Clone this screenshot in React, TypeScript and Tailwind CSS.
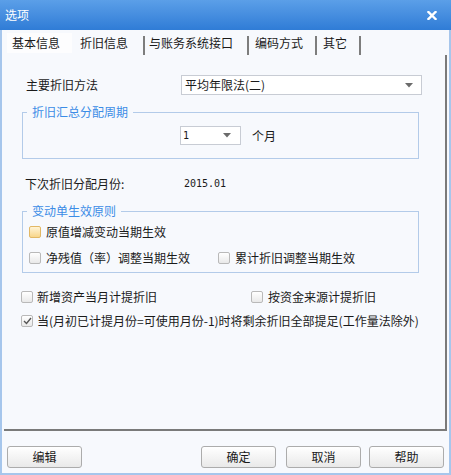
import React from "react";

const font = { fontFamily: '"Noto Sans CJK SC", "Noto Sans", sans-serif' };

function Arrow() {
  return (
    <svg width="8" height="5" viewBox="0 0 8 5" className="shrink-0">
      <path d="M0 0 H8 L4 4.5 Z" fill="#6b6b6b" />
    </svg>
  );
}

function Check({ state }: { state?: "hover" | "checked" }) {
  const box =
    state === "hover"
      ? "border-[#e2b865] bg-gradient-to-b from-[#fff4d6] to-[#f8d68a]"
      : "border-[#b9b9b9] bg-gradient-to-b from-[#ffffff] to-[#e9e9e9]";
  return (
    <span
      className={`flex h-[12px] w-[12px] shrink-0 items-center justify-center rounded-[2px] border ${box}`}
    >
      {state === "checked" && (
        <svg width="9" height="8" viewBox="0 0 9 8">
          <path d="M1 4 L3.5 6.5 L8 1" fill="none" stroke="#555" strokeWidth="1.4" />
        </svg>
      )}
    </span>
  );
}

function Btn({ children, className = "" }: { children: React.ReactNode; className?: string }) {
  return (
    <button
      className={`flex h-[22px] w-[75px] items-center justify-center rounded-[3px] border border-[#acacac] bg-gradient-to-b from-[#ffffff] to-[#e9e9e9] text-[12px] text-[#1a1a1a] ${className}`}
    >
      {children}
    </button>
  );
}

export default function App() {
  return (
    <div
      style={font}
      className="flex h-[475px] w-[451px] flex-col overflow-hidden bg-[#f7f9fd] text-[12px] leading-[16px] text-[#1a1a1a]"
    >
      {/* title bar */}
      <div className="flex h-[30px] shrink-0 items-center justify-between bg-gradient-to-b from-[#5b9fe8] to-[#2f7cd6] pl-[5px] pr-[14px]">
        <span className="text-[12px] text-white">选项</span>
        <svg width="10" height="9" viewBox="0 0 10 9">
          <path d="M1.5 1 L8.5 8 M8.5 1 L1.5 8" stroke="#fff" strokeWidth="2.4" strokeLinecap="square" />
        </svg>
      </div>

      <div className="flex flex-1 flex-col border-x-2 border-b-2 border-[#a6c6ec] px-[2px]">
        {/* tabs */}
        <div className="flex h-[25px] shrink-0 items-end">
          <span className="mb-[2px] ml-[3px] flex h-[20px] w-[65px] items-center bg-[#fdfdfe] pl-[5px]">
            基本信息
          </span>
          <span className="mb-[4px] flex w-[71px] items-center pl-[8px]">折旧信息</span>
          <span className="mb-0 h-[19px] w-[2px] bg-[#7d7d7d]" />
          <span className="mb-[4px] w-[102px] pl-[4px]">与账务系统接口</span>
          <span className="h-[19px] w-[2px] bg-[#7d7d7d]" />
          <span className="mb-[4px] w-[66px] pl-[6px]">编码方式</span>
          <span className="h-[19px] w-[2px] bg-[#7d7d7d]" />
          <span className="mb-[4px] w-[42px] pl-[6px]">其它</span>
          <span className="h-[19px] w-[2px] bg-[#7d7d7d]" />
        </div>

        {/* tab panel */}
        <div className="flex h-[376px] shrink-0 flex-col border-b-2 border-r-2 border-[#7a7a7a] pt-[20px]">
          <div className="ml-[22px] flex h-[20px] items-center">
            <span className="w-[155px]">主要折旧方法</span>
            <div className="flex h-[20px] w-[241px] items-center justify-between border border-[#c8ccd4] bg-white pl-[3px] pr-[8px]">
              <span>平均年限法(二)</span>
              <Arrow />
            </div>
          </div>

          <fieldset className="ml-[18px] mt-[9px] w-[397px] border border-[#b3cbe9] pb-[13px] pl-[4px]">
            <legend className="px-[5px] text-[#3b8ce6]">折旧汇总分配周期</legend>
            <div className="mt-[6px] flex items-center">
              <div className="ml-[153px] flex h-[19px] w-[61px] items-center justify-between border border-[#c8ccd4] bg-white pl-[2px] pr-[9px]">
                <span style={{ fontFamily: '"DejaVu Sans Mono", monospace' }} className="text-[10px]">
                  1
                </span>
                <Arrow />
              </div>
              <span className="ml-[11px]">个月</span>
            </div>
          </fieldset>

          <div className="ml-[21px] mt-[17px] flex items-center">
            <span className="w-[159px]">下次折旧分配月份:</span>
            <span style={{ fontFamily: '"DejaVu Sans Mono", monospace' }} className="text-[10px]">
              2015.01
            </span>
          </div>

          <fieldset className="ml-[18px] mt-[11px] w-[397px] border border-[#b3cbe9] pb-[6px] pl-[4px]">
            <legend className="px-[5px] text-[#3b8ce6]">变动单生效原则</legend>
            <div className="ml-[2px] mt-[5px] flex items-center gap-[5px]">
              <Check state="hover" />
              <span>原值增减变动当期生效</span>
            </div>
            <div className="ml-[2px] mt-[10px] flex items-center">
              <div className="flex w-[189px] items-center gap-[5px]">
                <Check />
                <span>净残值（率）调整当期生效</span>
              </div>
              <div className="flex items-center gap-[5px]">
                <Check />
                <span>累计折旧调整当期生效</span>
              </div>
            </div>
          </fieldset>

          <div className="ml-[17px] mt-[16px] flex items-center">
            <div className="flex w-[230px] items-center gap-[4px]">
              <Check />
              <span>新增资产当月计提折旧</span>
            </div>
            <div className="flex items-center gap-[5px]">
              <Check />
              <span>按资金来源计提折旧</span>
            </div>
          </div>

          <div className="ml-[17px] mt-[8px] flex items-center gap-[4px]">
            <Check state="checked" />
            <span>当(月初已计提月份=可使用月份-1)时将剩余折旧全部提足(工作量法除外)</span>
          </div>
        </div>

        {/* buttons */}
        <div className="mt-[15px] flex">
          <Btn className="ml-[3px]">编辑</Btn>
          <Btn className="ml-auto">确定</Btn>
          <Btn className="ml-[10px]">取消</Btn>
          <Btn className="ml-[8px] mr-[3px]">帮助</Btn>
        </div>
      </div>
    </div>
  );
}
